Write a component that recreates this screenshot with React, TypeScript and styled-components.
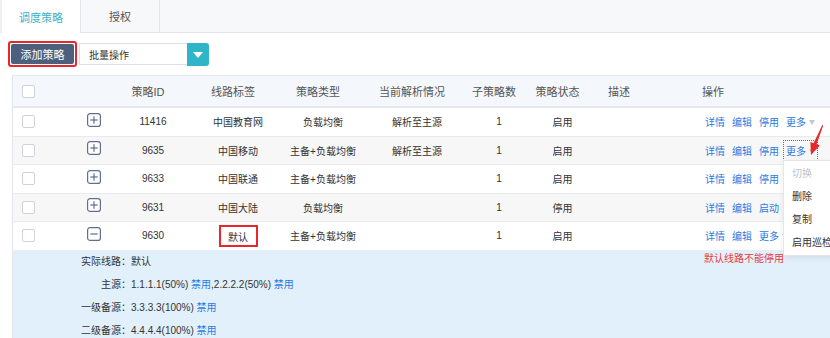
import React from "react";
import styled, { createGlobalStyle, css } from "styled-components";

const GlobalStyle = createGlobalStyle`
  html, body {
    margin: 0;
    padding: 0;
    background: #fff;
  }
  body {
    font-family: "Liberation Sans", "Noto Sans CJK SC", sans-serif;
    color: #333;
  }
`;

const Page = styled.div`
  position: relative;
  width: 830px;
  height: 338px;
  overflow: hidden;
  background: #fff;
`;

const TabBar = styled.div`
  display: flex;
  height: 32px;
  background: #f7f8fa;
  border-bottom: 1px solid #e3e6eb;
  border-left: 2px solid #eef0f3;
`;

const Tab = styled.div<{ $active?: boolean }>`
  width: 78px;
  display: flex;
  align-items: center;
  justify-content: center;
  font-size: 11px;
  border-right: 1px solid #e3e6eb;
  color: #555;
  ${(p) =>
    p.$active &&
    css`
      background: #fff;
      color: #3ab3c8;
      height: 33px;
    `}
`;

const Toolbar = styled.div`
  display: flex;
  align-items: center;
  gap: 2px;
  padding: 8px 0 0 8px;
`;

const Highlight = styled.div`
  border: 2px solid #e8262b;
  border-radius: 3px;
  padding: 1px;
  display: flex;
`;

const PrimaryButton = styled.button`
  width: 63px;
  height: 20px;
  border: none;
  border-radius: 2px;
  background: #4c607e;
  color: #fff;
  font-family: inherit;
  font-size: 11px;
  padding: 0;
`;

const Select = styled.div`
  display: flex;
  align-items: center;
`;

const SelectBox = styled.div`
  width: 98px;
  height: 20px;
  border: 1px solid #dcdfe5;
  border-right: none;
  display: flex;
  align-items: center;
  padding-left: 9px;
  font-size: 10px;
  color: #333;
`;

const SelectArrow = styled.div`
  width: 22px;
  height: 23px;
  background: #2fb4c8;
  border-radius: 0 3px 3px 0;
  display: flex;
  align-items: center;
  justify-content: center;
  &::after {
    content: "";
    border-left: 5px solid transparent;
    border-right: 5px solid transparent;
    border-top: 6px solid #fff;
    margin-top: 1px;
  }
`;

const Table = styled.div`
  margin: 8px 0 0 12px;
  border-left: 1px solid #e3e6eb;
  border-top: 1px solid #e6e9ee;
`;

const columns = "48px 62px 60px 110px 60px 128px 36px 91px 82px 1fr";

const HeaderRow = styled.div`
  display: grid;
  grid-template-columns: ${columns};
  height: 30px;
  background: #f4f7fb;
  border-bottom: 2px solid #e5e9ef;
  font-size: 11px;
  color: #555;
`;

const Row = styled.div<{ $striped?: boolean }>`
  display: grid;
  grid-template-columns: ${columns};
  height: 28.5px;
  box-sizing: border-box;
  border-bottom: 1px solid #e8eaee;
  background: ${(p) => (p.$striped ? "#f7f7f7" : "#fff")};
  font-size: 10px;
  color: #333;
`;

const Cell = styled.div<{ $align?: "left" | "center"; $pad?: number; $head?: boolean }>`
  position: relative;
  display: flex;
  align-items: center;
  white-space: nowrap;
  justify-content: ${(p) => (p.$align === "left" ? "flex-start" : "center")};
  padding-left: ${(p) => p.$pad ?? 0}px;
  padding-right: ${(p) => (p.$head && p.$align !== "left" ? 10 : 0)}px;
`;

const Check = styled.span`
  width: 11px;
  height: 11px;
  border: 1px solid #cfd3d9;
  border-radius: 2px;
  background: #fff;
  margin-left: 9px;
`;

const Toggle = styled.svg`
  margin-top: -4px;
  margin-left: 3px;
`;

const Marked = styled.span`
  border: 2px solid #e8262b;
  width: 35px;
  height: 18px;
  display: flex;
  align-items: center;
  justify-content: center;
  margin-top: 1px;
`;

const Actions = styled.div`
  display: flex;
  align-items: center;
  gap: 7px;
  padding-left: 15px;
  position: relative;
`;

const Link = styled.a<{ $focused?: boolean }>`
  color: #2b7be0;
  text-decoration: none;
  cursor: pointer;
  ${(p) =>
    p.$focused &&
    css`
      outline: 1px dotted #2b7be0;
      outline-offset: 2px;
    `}
`;

const Caret = styled.span`
  display: inline-block;
  margin-left: 3px;
  border-left: 3.5px solid transparent;
  border-right: 3.5px solid transparent;
  border-top: 5px solid #c4c7cc;
  vertical-align: 1px;
`;

const Note = styled.span`
  position: absolute;
  left: 14px;
  top: 22px;
  color: #e83b3b;
  font-size: 10px;
  white-space: nowrap;
`;

const Detail = styled.div`
  background: #e2f0fc;
  display: grid;
  grid-template-columns: 118px auto;
  grid-auto-rows: 23px;
  align-items: center;
  margin-top: -1px;
  height: 100px;
  font-size: 10px;
  color: #333;
`;

const DetailLabel = styled.span`
  text-align: right;
  white-space: nowrap;
  margin-top: -1px;
`;

const DetailValue = styled.span`
  white-space: nowrap;
  margin-top: -1px;
`;

const Menu = styled.div`
  position: absolute;
  left: 783px;
  top: 160px;
  width: 64px;
  height: 94px;
  background: #fff;
  border: 1px solid #e4e6ea;
  box-shadow: 0 2px 6px rgba(0, 0, 0, 0.08);
  font-size: 10px;
`;

const MenuItem = styled.div<{ $disabled?: boolean }>`
  height: 23px;
  display: flex;
  align-items: center;
  padding-left: 8px;
  color: ${(p) => (p.$disabled ? "#c3c3c3" : "#333")};
  white-space: nowrap;
`;

const Pointer = styled.svg`
  position: absolute;
  left: 800px;
  top: 120px;
`;

type Strategy = {
  id: string;
  tag: string;
  type: string;
  parse: string;
  status: string;
  actions: string[];
  more: boolean;
  focused?: boolean;
  expanded?: boolean;
  marked?: boolean;
  note?: string;
};

// rows 3 and 4 have their "更多" under the open menu
const strategies: Strategy[] = [
  { id: "11416", tag: "中国教育网", type: "负载均衡", parse: "解析至主源", status: "启用", actions: ["详情", "编辑", "停用"], more: true },
  { id: "9635", tag: "中国移动", type: "主备+负载均衡", parse: "解析至主源", status: "启用", actions: ["详情", "编辑", "停用"], more: true, focused: true },
  { id: "9633", tag: "中国联通", type: "主备+负载均衡", parse: "", status: "启用", actions: ["详情", "编辑", "停用"], more: false },
  { id: "9631", tag: "中国大陆", type: "负载均衡", parse: "", status: "停用", actions: ["详情", "编辑", "启动"], more: false },
  {
    id: "9630",
    tag: "默认",
    type: "主备+负载均衡",
    parse: "",
    status: "启用",
    actions: ["详情", "编辑"],
    more: true,
    expanded: true,
    marked: true,
    note: "默认线路不能停用",
  },
];

const ExpandIcon: React.FC<{ open?: boolean }> = ({ open }) => (
  <Toggle width="14" height="14" viewBox="0 0 14 14">
    <rect x="0.6" y="0.6" width="12.8" height="12.8" rx="2.5" fill="#fff" stroke="#5f6f8e" strokeWidth="1.2" />
    <line x1="3.3" y1="7" x2="10.7" y2="7" stroke="#5f6f8e" strokeWidth="1.2" />
    {!open && <line x1="7" y1="3.3" x2="7" y2="10.7" stroke="#5f6f8e" strokeWidth="1.2" />}
  </Toggle>
);

const App: React.FC = () => {
  return (
    <>
      <GlobalStyle />
      <Page>
        <TabBar>
          <Tab $active>调度策略</Tab>
          <Tab>授权</Tab>
        </TabBar>

        <Toolbar>
          <Highlight>
            <PrimaryButton>添加策略</PrimaryButton>
          </Highlight>
          <Select>
            <SelectBox>批量操作</SelectBox>
            <SelectArrow />
          </Select>
        </Toolbar>

        <Table>
          <HeaderRow>
            <Cell $align="left">
              <Check />
            </Cell>
            <Cell />
            <Cell $head>策略ID</Cell>
            <Cell $head>线路标签</Cell>
            <Cell $head>策略类型</Cell>
            <Cell $head>当前解析情况</Cell>
            <Cell $head>子策略数</Cell>
            <Cell $head>策略状态</Cell>
            <Cell $head $align="left">描述</Cell>
            <Cell $head $align="left" $pad={12}>操作</Cell>
          </HeaderRow>

          {strategies.map((s, i) => (
            <Row key={s.id} $striped={i % 2 === 1}>
              <Cell $align="left">
                <Check />
              </Cell>
              <Cell>
                <ExpandIcon open={s.expanded} />
              </Cell>
              <Cell>{s.id}</Cell>
              <Cell>{s.marked ? <Marked>{s.tag}</Marked> : s.tag}</Cell>
              <Cell>{s.type}</Cell>
              <Cell>{s.parse}</Cell>
              <Cell>1</Cell>
              <Cell>{s.status}</Cell>
              <Cell />
              <Cell $align="left">
                <Actions>
                  {s.actions.map((a) => (
                    <Link key={a}>{a}</Link>
                  ))}
                  {s.more && (
                    <Link $focused={s.focused}>
                      更多
                      <Caret />
                    </Link>
                  )}
                  {s.note && <Note>{s.note}</Note>}
                </Actions>
              </Cell>
            </Row>
          ))}

          <Detail>
            <DetailLabel>实际线路：</DetailLabel>
            <DetailValue>默认</DetailValue>
            <DetailLabel>主源：</DetailLabel>
            <DetailValue>
              1.1.1.1(50%) <Link>禁用</Link>,2.2.2.2(50%) <Link>禁用</Link>
            </DetailValue>
            <DetailLabel>一级备源：</DetailLabel>
            <DetailValue>
              3.3.3.3(100%) <Link>禁用</Link>
            </DetailValue>
            <DetailLabel>二级备源：</DetailLabel>
            <DetailValue>
              4.4.4.4(100%) <Link>禁用</Link>
            </DetailValue>
          </Detail>
        </Table>

        <Menu>
          <MenuItem $disabled>切换</MenuItem>
          <MenuItem>删除</MenuItem>
          <MenuItem>复制</MenuItem>
          <MenuItem>启用巡检</MenuItem>
        </Menu>

        <Pointer width="30" height="40" viewBox="0 0 30 40">
          <polygon
            points="22.3,5 23.2,5.4 16.6,24.2 19.8,25.4 11,35 10.4,22 13.6,23.2"
            fill="#e8262b"
          />
        </Pointer>
      </Page>
    </>
  );
};

export default App;
